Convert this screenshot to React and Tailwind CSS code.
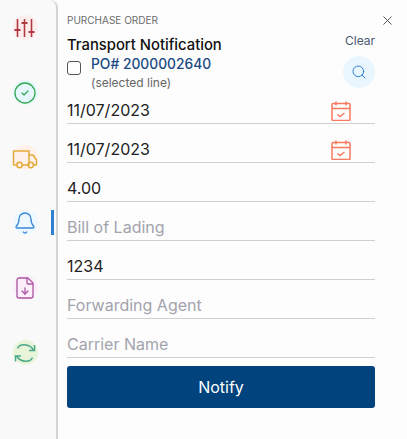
import { useState } from "react";
import { CircleCheck, Bell, FileDown, Search, X } from "lucide-react";

const SlidersIcon = () => (
  <svg width="32" height="32" viewBox="0 0 32 32" fill="none" stroke="#b03a40" strokeWidth="1.6" className="shrink-0">
    <path d="M8.5 7v18M15.5 7v18M22.5 7v18" />
    <path d="M5.5 18h6M12.5 11h6M19.5 20h6" strokeWidth="2" />
  </svg>
);

const TruckIcon = () => (
  <svg width="32" height="32" viewBox="0 0 32 32" fill="none" stroke="#e3ab3a" strokeWidth="1.5" strokeLinejoin="round" className="shrink-0">
    <path d="M7.5 23H4.5V9h15.5v14h-6.5" />
    <path d="M20 13h4l3.5 5v5H25" />
    <circle cx="10.5" cy="23" r="2.7" />
    <circle cx="21.8" cy="23" r="2.7" />
  </svg>
);

const SyncIcon = () => (
  <svg width="32" height="32" viewBox="0 0 32 32" fill="none" stroke="#4aa88a" strokeWidth="1.5" className="shrink-0">
    <path d="M8.5 11.5C10.5 6.5 20 6 24.5 13" />
    <path d="M25.5 8v5.5H20" />
    <path d="M23.5 20.5C21.5 25.5 12 26 7.5 19" />
    <path d="M6.5 24.5V19H12" />
  </svg>
);

const CalendarIcon = () => (
  <svg width="20" height="20" viewBox="7 4 20 20" fill="none" stroke="#f9795f" strokeWidth="1.5" className="mr-[24px] mb-[2px]">
    <rect x="8" y="6.5" width="18" height="17" rx="1" />
    <path d="M8 11.5h18M12 4.5v4M22 4.5v4" />
    <path d="M13.5 17.5l2.5 2 4.5-3.5" />
  </svg>
);

const NAV = [
  { icon: <SlidersIcon />, bg: "bg-[#fdeeee]" },
  { icon: <CircleCheck size={24} strokeWidth={1.3} className="text-[#36a852] shrink-0" />, bg: "bg-[#e6f8fd]" },
  { icon: <TruckIcon />, bg: "bg-[#fff1ea]" },
  { icon: <Bell size={24} strokeWidth={1.3} className="text-[#3a86d6] shrink-0" />, bg: "bg-[#eef8ff]", active: true },
  { icon: <FileDown size={24} strokeWidth={1.3} className="text-[#a9569f] shrink-0" />, bg: "bg-[#fceefa]" },
  { icon: <SyncIcon />, bg: "bg-[#e8f5d9]" },
];

const FIELDS = [
  { value: "11/07/2023", date: true },
  { value: "11/07/2023", date: true },
  { value: "4.00" },
  { placeholder: "Bill of Lading" },
  { value: "1234" },
  { placeholder: "Forwarding Agent" },
  { placeholder: "Carrier Name" },
];

export default function App() {
  const [checked, setChecked] = useState(false);

  return (
    <main className="w-[407px] h-[439px] flex bg-[#fdfdfd] overflow-hidden font-['Inter',sans-serif]">
      <nav className="w-[58px] shrink-0 bg-[#f9f9f9] border-r-2 border-[#d4d4d4] rounded-tr-lg flex flex-col items-center pt-[15px] gap-[40px]">
        {NAV.map(({ icon, bg, active }, i) => (
          <div key={i} className="w-full flex justify-center relative pr-[6px]">
            <div className={`w-[25px] h-[25px] rounded-full flex items-center justify-center ${bg}`}>{icon}</div>
            {active && <span className="absolute right-[2px] top-0 w-[3px] h-[25px] bg-[#2f7fd0]" />}
          </div>
        ))}
      </nav>

      <section className="flex-1 pl-[9px] pr-[32px] relative">
        <button className="absolute right-[12px] top-[13px] text-[#444]"><X size={15} strokeWidth={1.4} /></button>
        <div className="h-[85px] relative">
          <p className="pt-[13px] text-[10px] leading-[14px] text-[#6b6b6b]">PURCHASE ORDER</p>
          <h2 className="mt-[10px] text-[14.8px] leading-[17px] font-medium text-[#111]">Transport Notification</h2>
          <div className="flex items-start gap-[10px] mt-[2px]">
            <input
              type="checkbox"
              checked={checked}
              onChange={e => setChecked(e.target.checked)}
              className="appearance-none w-[14px] h-[14px] mt-[5px] border border-[#555] rounded-[3px] bg-white"
            />
            <div>
              <div className="text-[13.8px] leading-[17px] font-medium text-[#1a4a82]">PO# 2000002640</div>
              <div className="mt-[3px] text-xs leading-[14px] text-[#666]">(selected line)</div>
            </div>
          </div>
          <span className="absolute right-0 top-[34px] text-xs leading-[14px] text-[#4a5a70]">Clear</span>
          <button className="absolute right-0 top-[56px] w-8 h-8 rounded-full bg-[#eaf6fd] flex items-center justify-center text-[#2f7fd0]">
            <Search size={16} strokeWidth={1.5} />
          </button>
        </div>

        {FIELDS.map((f, i) => (
          <div key={i} className="h-[39px] border-b border-[#d0d0d0] flex items-end justify-between">
            <span className={`text-base leading-[26px] ${f.value ? "text-[#222]" : "text-[#a3a3ad]"}`}>{f.value || f.placeholder}</span>
            {f.date && <CalendarIcon />}
          </div>
        ))}

        <button className="mt-[8px] w-full h-[42px] bg-[#01437d] rounded-[3px] text-white text-base font-normal">Notify</button>
      </section>
    </main>
  );
}
